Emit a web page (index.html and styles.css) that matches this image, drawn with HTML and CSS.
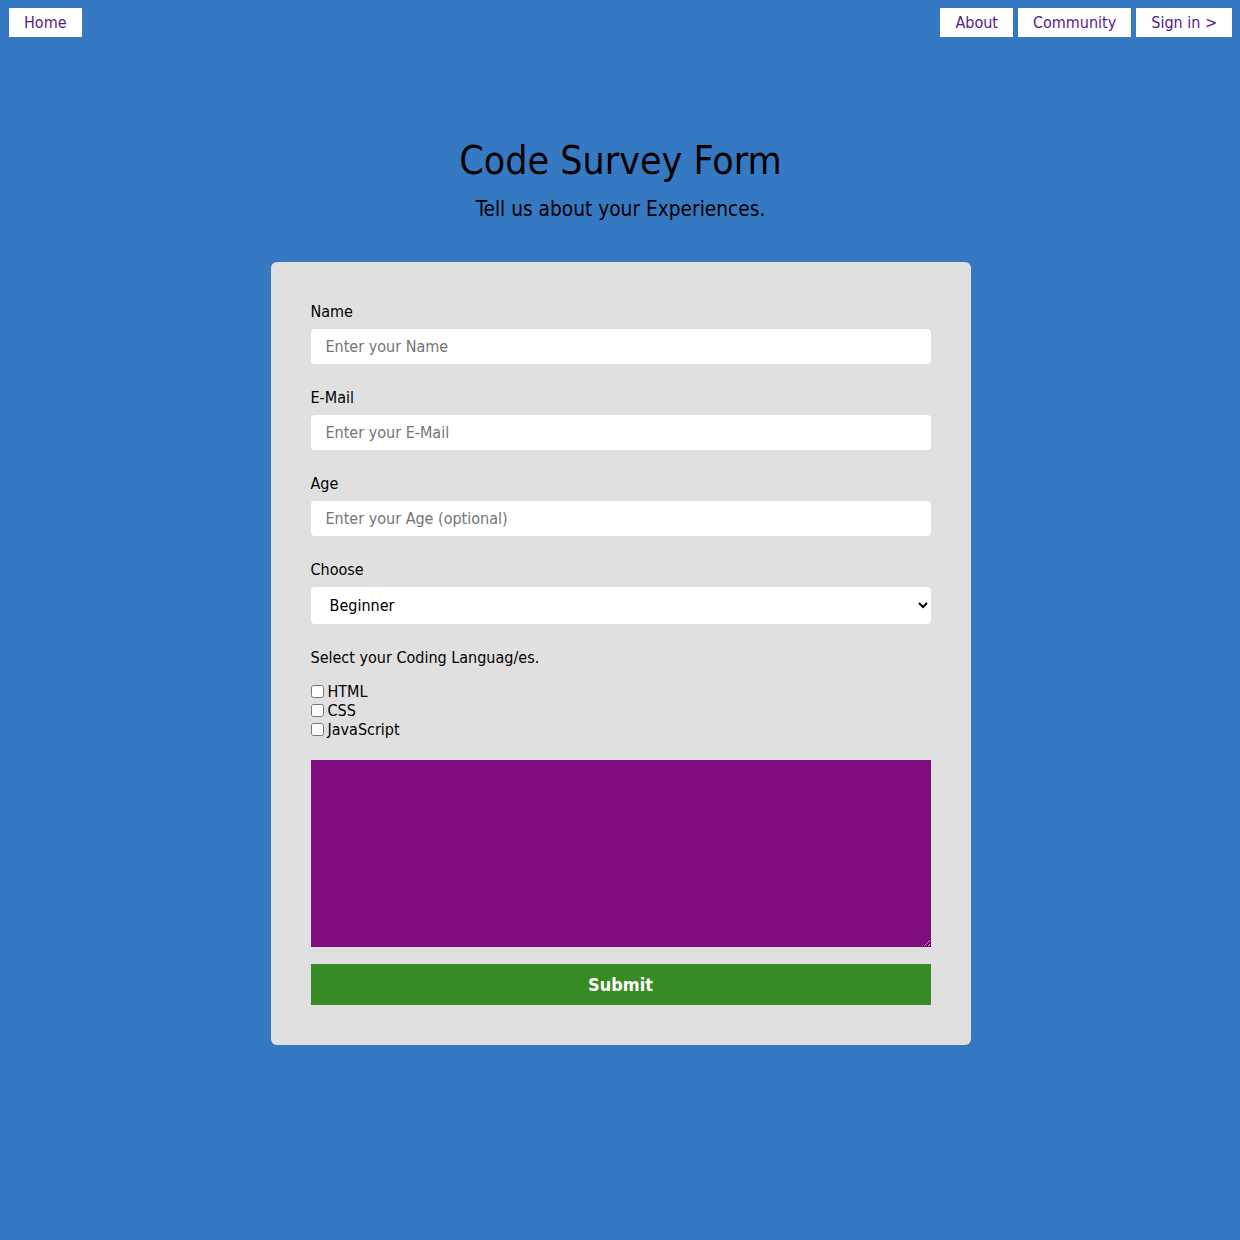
FILE: index.html
```html
<!DOCTYPE html>
<html lang="en">
<head>
<meta charset="utf-8">
<title>Code Survey Form</title>
<link rel="stylesheet" href="styles.css">
</head>
<body>
<nav class="nav">
  <a class="nav-btn" href="#">Home</a>
  <div class="nav-right">
    <a class="nav-btn" href="#">About</a>
    <a class="nav-btn" href="#">Community</a>
    <a class="nav-btn" href="#">Sign in &gt;</a>
  </div>
</nav>
<header class="header">
  <h1 class="title">Code Survey Form</h1>
  <p class="subtitle">Tell us about your Experiences.</p>
</header>
<form class="card">
  <div class="group">
    <label class="label" for="name">Name</label>
    <input class="field" id="name" type="text" placeholder="Enter your Name">
  </div>
  <div class="group">
    <label class="label" for="email">E-Mail</label>
    <input class="field" id="email" type="email" placeholder="Enter your E-Mail">
  </div>
  <div class="group">
    <label class="label" for="age">Age</label>
    <input class="field" id="age" type="number" placeholder="Enter your Age (optional)">
  </div>
  <div class="group">
    <label class="label" for="choose">Choose</label>
    <select class="select" id="choose">
      <option>Beginner</option>
      <option>Intermediate</option>
      <option>Advanced</option>
    </select>
  </div>
  <p class="question">Select your Coding Languag/es.</p>
  <div class="checks">
    <label class="check"><input type="checkbox" class="box"> HTML</label>
    <label class="check"><input type="checkbox" class="box"> CSS</label>
    <label class="check"><input type="checkbox" class="box"> JavaScript</label>
  </div>
  <textarea class="area"></textarea>
  <button class="submit" type="button">Submit</button>
</form>
</body>
</html>
```

FILE: styles.css
```css
* { box-sizing: border-box; }
html, body {
  margin: 0;
  background: #3679c3;
}
body {
  padding: 8px 8px 195px 9px;
  font-family: "DejaVu Sans Condensed", "DejaVu Sans", sans-serif;
  color: #000;
}
.nav {
  display: flex;
  justify-content: space-between;
  align-items: flex-start;
}
.nav-right {
  display: flex;
  gap: 5px;
}
.nav-btn {
  display: block;
  height: 29px;
  line-height: 29px;
  padding: 0 15px;
  background: #fff;
  color: #551a8b;
  text-decoration: none;
  font-size: 16px;
}
.header {
  text-align: center;
  padding-top: 100px;
}
.title {
  margin: 0;
  font-size: 39px;
  font-weight: normal;
  line-height: 48px;
}
.subtitle {
  margin: 12px 0 0;
  font-size: 20.7px;
  line-height: 24px;
}
.card {
  width: 700px;
  margin: 41px auto 0;
  background: #e0e0e0;
  border-radius: 6px;
  padding: 40px;
}
.group {
  margin-bottom: 24px;
}
.label {
  display: block;
  font-size: 16px;
  line-height: 19px;
  margin-bottom: 8px;
}
.field {
  display: block;
  width: 100%;
  height: 35px;
  border: none;
  border-radius: 4px;
  background: #fff;
  padding: 0 15px;
  font-family: inherit;
  font-size: 16px;
}
.field::placeholder { color: #757575; }
.select {
  display: block;
  width: 100%;
  height: 37px;
  border: none;
  border-radius: 4px;
  background: #fff;
  padding: 0 15px;
  font-family: inherit;
  font-size: 16px;
  color: #000;
}
.question {
  margin: 0 0 15px;
  font-size: 16px;
  line-height: 19px;
}
.checks {
  display: flex;
  flex-direction: column;
  margin-bottom: 21px;
}
.check {
  display: flex;
  align-items: center;
  font-size: 16px;
  line-height: 19px;
  height: 19px;
}
.box {
  margin: 0 4px 0 0;
  width: 13px;
  height: 13px;
}
.area {
  display: block;
  width: 100%;
  height: 187px;
  background: #800e80;
  border: none;
  margin: 0 0 17px;
}
.submit {
  display: block;
  width: 100%;
  height: 41px;
  border: none;
  background: #388a24;
  color: #fff;
  font-family: inherit;
  font-size: 18px;
  font-weight: bold;
}
```
